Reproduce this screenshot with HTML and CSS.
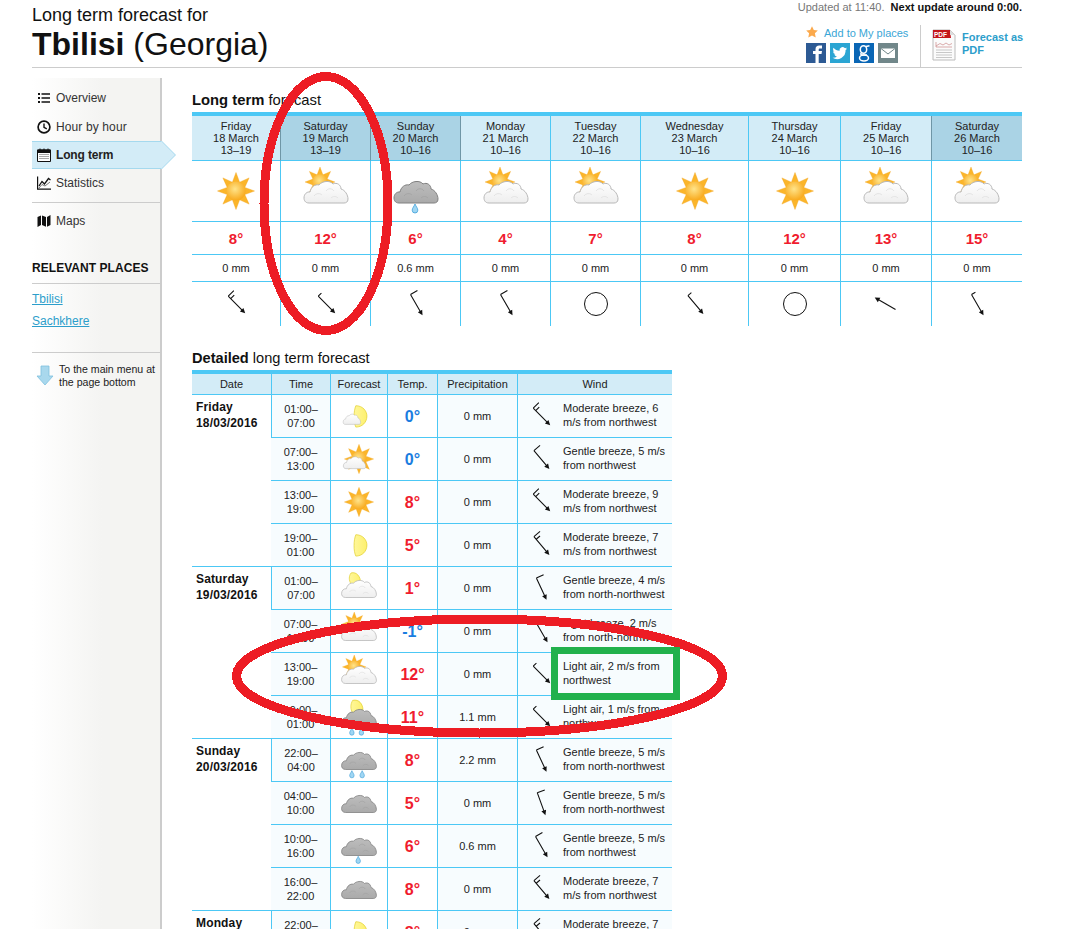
FILE: index.html
```html
<!DOCTYPE html>
<html lang="en">
<head>
<meta charset="utf-8">
<title>Long term forecast for Tbilisi (Georgia)</title>
<link rel="stylesheet" href="styles.css">
</head>
<body>
<svg class="defs" width="0" height="0" aria-hidden="true">
  <defs>
    <radialGradient id="g-core" cx="45%" cy="40%" r="60%"><stop offset="0" stop-color="#ffe48a"/><stop offset="1" stop-color="#f8a91c"/></radialGradient>
    <linearGradient id="g-white" x1="0" y1="0" x2="0" y2="1"><stop offset="0" stop-color="#ffffff"/><stop offset="1" stop-color="#eeeeee"/></linearGradient>
    <linearGradient id="g-gray" x1="0" y1="0" x2="0" y2="1"><stop offset="0" stop-color="#bdbdbd"/><stop offset="1" stop-color="#aaaaaa"/></linearGradient>
    <linearGradient id="g-moon" x1="0" y1="0" x2="1" y2="0"><stop offset="0" stop-color="#fff79a"/><stop offset="1" stop-color="#fdf06e"/></linearGradient>
    <g id="sunshape">
      <polygon fill="#fbb52a" stroke="#f3a51c" stroke-width=".4" points="42.5,24 32.8,27.6 37.1,37.1 27.6,32.8 24,42.5 20.4,32.8 10.9,37.1 15.2,27.6 5.5,24 15.2,20.4 10.9,10.9 20.4,15.2 24,5.5 27.6,15.2 37.1,10.9 32.8,20.4"/>
      <circle cx="24" cy="24" r="9.6" fill="url(#g-core)"/>
    </g>
    <path id="cloudshape" d="M7 36C3 36 2 33 2 31C2 27 5 24.500 8 25C9 20 13 17 17 18C20 14 28 13 31 17C35 15 39 18 39 22C43 23 46 28 46 32C46 35 44 36 42 36Z"/>
    <path id="dropshape" d="M0 0C1 2.500 2.800 4.200 2.800 6.200A2.800 2.800 0 0 1 -2.800 6.200C-2.800 4.200 -1 2.500 0 0Z" fill="#9fd6f3" stroke="#3f9fd8" stroke-width=".8"/>
    <path id="moonshape" d="M20 11C29 11 34 18 34 24C34 32 28 38 20 38C17 32 17 18 20 11Z" fill="url(#g-moon)" stroke="#e2cf2c" stroke-width=".9"/>
  </defs>
  <symbol id="i-sun" viewBox="0 0 48 48"><use href="#sunshape"/></symbol>
  <symbol id="i-partly" viewBox="0 0 48 48">
    <use href="#sunshape" transform="translate(-1.440 -4.440) scale(.81)"/>
    <use href="#cloudshape" fill="url(#g-white)" stroke="#b8b8b8"/>
    <path d="M12 29c2-3 6-3 8-1M24 24c2-3 6-3 8 0M29 31c2-2 5-2 7 0" fill="none" stroke="#dedede" stroke-width=".8"/>
  </symbol>
  <symbol id="i-sunsmallcloud" viewBox="0 0 48 48">
    <use href="#sunshape"/>
    <use href="#cloudshape" fill="url(#g-white)" stroke="#b2b2b2" transform="translate(3 11) scale(.64 .7)"/>
  </symbol>
  <symbol id="i-mooncloudsmall" viewBox="0 0 48 48">
    <use href="#moonshape"/>
    <use href="#cloudshape" fill="url(#g-white)" stroke="#b2b2b2" transform="translate(3 13) scale(.5 .6)"/>
  </symbol>
  <symbol id="i-moon" viewBox="0 0 48 48"><use href="#moonshape"/></symbol>
  <symbol id="i-moonbehind" viewBox="0 0 48 48">
    <path d="M14 5C21 3 26 10 26 17L14 19C11 14 11 9 14 5Z" fill="url(#g-moon)" stroke="#e2cf2c" stroke-width=".9"/>
    <use href="#cloudshape" fill="url(#g-white)" stroke="#b8b8b8"/>
    <path d="M12 29c2-3 6-3 8-1M24 24c2-3 6-3 8 0M29 31c2-2 5-2 7 0" fill="none" stroke="#dedede" stroke-width=".8"/>
  </symbol>
  <symbol id="i-moonrain" viewBox="0 0 48 48">
    <path d="M16 3C24 1 29 8 29 15L16 19C13 14 13 8 16 3Z" fill="url(#g-moon)" stroke="#e2cf2c" stroke-width=".9"/>
    <use href="#cloudshape" fill="url(#g-gray)" stroke="#808080"/>
    <use href="#dropshape" transform="translate(15 38)"/>
    <use href="#dropshape" transform="translate(27 38)"/>
  </symbol>
  <symbol id="i-cloud" viewBox="0 0 48 48">
    <use href="#cloudshape" fill="url(#g-gray)" stroke="#808080"/>
    <path d="M12 29c2-3 6-3 8-1M24 24c2-3 6-3 8 0M29 31c2-2 5-2 7 0" fill="none" stroke="#a2a2a2" stroke-width=".8"/>
  </symbol>
  <symbol id="i-rain1" viewBox="0 0 48 48">
    <use href="#cloudshape" fill="url(#g-gray)" stroke="#808080"/>
    <path d="M12 29c2-3 6-3 8-1M24 24c2-3 6-3 8 0M29 31c2-2 5-2 7 0" fill="none" stroke="#a2a2a2" stroke-width=".8"/>
    <use href="#dropshape" transform="translate(23 37)"/>
  </symbol>
  <symbol id="i-rain2" viewBox="0 0 48 48">
    <use href="#cloudshape" fill="url(#g-gray)" stroke="#808080"/>
    <path d="M12 29c2-3 6-3 8-1M24 24c2-3 6-3 8 0M29 31c2-2 5-2 7 0" fill="none" stroke="#a2a2a2" stroke-width=".8"/>
    <use href="#dropshape" transform="translate(15 37.500)"/>
    <use href="#dropshape" transform="translate(28 37.500)"/>
  </symbol>
  <symbol id="w-mod" viewBox="0 0 32 32">
    <path d="M16 5V26M16 5H24M16 8.500H21" fill="none" stroke="#111" stroke-width="1.100"/>
    <path d="M16 29L13.500 24H18.500Z" fill="#111"/>
  </symbol>
  <symbol id="w-gen" viewBox="0 0 32 32">
    <path d="M16 5V26M16 5H24" fill="none" stroke="#111" stroke-width="1.100"/>
    <path d="M16 29L13.500 24H18.500Z" fill="#111"/>
  </symbol>
  <symbol id="w-lig" viewBox="0 0 32 32">
    <path d="M16 5V26M16 5H20.500" fill="none" stroke="#111" stroke-width="1.100"/>
    <path d="M16 29L13.500 24H18.500Z" fill="#111"/>
  </symbol>
  <symbol id="w-none" viewBox="0 0 32 32">
    <path d="M16 5V26" fill="none" stroke="#111" stroke-width="1.100"/>
    <path d="M16 29L13.500 24H18.500Z" fill="#111"/>
  </symbol>
</svg>

<div class="page">
  <header class="top">
    <div class="title">
      <div class="title-sub">Long term forecast for</div>
      <h1 class="title-main"><strong>Tbilisi</strong> (Georgia)</h1>
    </div>
    <div class="top-right">
      <div class="updated">Updated at 11:40.&nbsp; <strong>Next update around 0:00.</strong></div>
      <div class="tools">
        <div class="share">
          <div class="add">
            <svg class="star" viewBox="0 0 12 12"><path d="M6 .3L7.800 4 11.800 4.500 8.900 7.300 9.700 11.500 6 9.400 2.300 11.500 3.100 7.300 .2 4.500 4.200 4Z" fill="#fba94c"/></svg>
            <a class="add-link">Add to My places</a>
          </div>
          <div class="social">
            <span class="soc soc-f"><svg viewBox="0 0 20 20"><path d="M9.500 20V11H7V8H9.500V6.200C9.500 3.800 11 2.500 13.200 2.500H16V5.500H14C13 5.500 12.700 6 12.700 6.800V8H16L15.500 11H12.700V20Z" fill="#fff"/></svg></span>
            <span class="soc soc-t"><svg viewBox="0 0 20 20"><path d="M17 5.500c-.6.300-1.100.4-1.700.5.600-.4 1.100-.9 1.300-1.600-.6.300-1.200.6-1.900.7A3 3 0 0 0 9.600 7.800C7.200 7.700 5 6.500 3.500 4.700c-.8 1.400-.4 3.100.9 4-.5 0-.9-.1-1.300-.4 0 1.500 1 2.700 2.400 3-.4.100-.9.100-1.300 0 .4 1.200 1.500 2 2.800 2.100A6 6 0 0 1 2.500 14.700 8.500 8.500 0 0 0 15.600 7.100c.6-.4 1-.9 1.400-1.600Z" fill="#fff"/></svg></span>
            <span class="soc soc-g"><svg viewBox="0 0 20 20"><g fill="none" stroke="#fff" stroke-width="1.500"><ellipse cx="9.500" cy="6.500" rx="3.200" ry="3.800"/><ellipse cx="10" cy="15" rx="4.500" ry="3"/><path d="M7.500 10C6 11 7 12 9 12C11 12 13 12 13 12M12 3.500L15.500 2.800"/></g></svg></span>
            <span class="soc soc-m"><svg viewBox="0 0 20 20"><path d="M3 5.500H17V15H3Z" fill="#fff"/><path d="M3 5.500L10 11 17 5.500" fill="none" stroke="#71878a" stroke-width="1"/></svg></span>
          </div>
        </div>
        <a class="pdf">
          <svg class="pdf-icon" viewBox="0 0 24 33">
            <path d="M1 1H18L23 6V31H1Z" fill="#fbfbfb" stroke="#bbbbbb"/>
            <path d="M1 1H18L19 9H1Z" fill="#c4161c"/>
            <path d="M18 1L23 6H18Z" fill="#dddddd"/>
            <path d="M4 13V18H20M4 17L8 14.500 11 16 14 14 17 16 20 14.500" fill="none" stroke="#c88" stroke-width=".7"/>
            <path d="M4 21H20M4 23.500H20M4 26H20M4 28.500H20" stroke="#bbbbbb" stroke-width=".8"/>
            <text x="2" y="7.500" class="pdf-label">PDF</text>
          </svg>
          <span class="pdf-text">Forecast as<br>PDF</span>
        </a>
      </div>
    </div>
  </header>

  <div class="main">
    <nav class="side">
      <ul class="menu">
        <li class="menu-item">
          <svg class="nav-ico" viewBox="0 0 14 14"><path d="M1 2h2v2H1zM1 6h2v2H1zM1 10h2v2H1zM4.500 2.300H13V3.700H4.500zM4.500 6.300H13V7.700H4.500zM4.500 10.300H13V11.700H4.500z" fill="#111"/></svg>
          Overview
        </li>
        <li class="menu-item menu-gap">
          <svg class="nav-ico" viewBox="0 0 14 14"><circle cx="7" cy="7" r="5.900" fill="none" stroke="#111" stroke-width="1.700"/><path d="M7 3.500V7.300L9.800 8.800" fill="none" stroke="#111" stroke-width="1.400"/></svg>
          Hour by hour
        </li>
        <li class="menu-item menu-active">
          <svg class="nav-ico" viewBox="0 0 14 14"><path d="M.5 2H13.500V13.500H.5Z" fill="#fff" stroke="#111"/><path d="M.5 2H13.500V4.500H.5ZM3 .5V2.500M7 .5V2.500M11 .5V2.500" fill="#111" stroke="#111"/><path d="M2.500 6.500H11.500M2.500 8.500H11.500M2.500 10.500H11.500" stroke="#555" stroke-width="1" stroke-dasharray="1 1"/></svg>
          Long term
        </li>
        <li class="menu-item">
          <svg class="nav-ico" viewBox="0 0 14 14"><path d="M.6 .5V13.200H14" fill="none" stroke="#111" stroke-width="1.200"/><path d="M2 10L5 5.500 7.500 8 11.500 2.500 13.500 4" fill="none" stroke="#111" stroke-width="1.300"/><path d="M2 12L5 8.500 8 10 13 6" fill="none" stroke="#555" stroke-width=".8"/></svg>
          Statistics
        </li>
        <li class="menu-item menu-sep">
          <svg class="nav-ico" viewBox="0 0 14 14"><path d="M.5 3L4 1.500V11L.5 13ZM5 1.500L9 3V12.800L5 11ZM10 3L13.500 1V11L10 12.800Z" fill="#111"/></svg>
          Maps
        </li>
      </ul>
      <h2 class="places-title">RELEVANT PLACES</h2>
      <ul class="places">
        <li><a class="place">Tbilisi</a></li>
        <li><a class="place">Sachkhere</a></li>
      </ul>
      <div class="to-menu">
        <svg class="down" viewBox="0 0 18 22"><path d="M5 1H13V11H17L9 20 1 11H5Z" fill="#a9d8ed" stroke="#7fc0de" stroke-width=".8"/></svg>
        <span>To the main menu at the page bottom</span>
      </div>
    </nav>

    <main class="content">
      <h2 class="section-title"><strong>Long term</strong> forecast</h2>
      <table class="long">
        <colgroup><col class="c88"><col class="c90"><col class="c90"><col class="c90"><col class="c90"><col class="c108"><col class="c92"><col class="c91"><col class="c91"></colgroup>
        <tr class="l-head">
          <th>Friday<br>18 March<br>13–19</th>
          <th class="wk">Saturday<br>19 March<br>13–19</th>
          <th class="wk">Sunday<br>20 March<br>10–16</th>
          <th>Monday<br>21 March<br>10–16</th>
          <th>Tuesday<br>22 March<br>10–16</th>
          <th>Wednesday<br>23 March<br>10–16</th>
          <th>Thursday<br>24 March<br>10–16</th>
          <th>Friday<br>25 March<br>10–16</th>
          <th class="wk">Saturday<br>26 March<br>10–16</th>
        </tr>
        <tr class="l-icon">
          <td><svg class="wx-l"><use href="#i-sun"/></svg></td>
          <td><svg class="wx-l"><use href="#i-partly"/></svg></td>
          <td><svg class="wx-l"><use href="#i-rain1"/></svg></td>
          <td><svg class="wx-l"><use href="#i-partly"/></svg></td>
          <td><svg class="wx-l"><use href="#i-partly"/></svg></td>
          <td><svg class="wx-l"><use href="#i-sun"/></svg></td>
          <td><svg class="wx-l"><use href="#i-sun"/></svg></td>
          <td><svg class="wx-l"><use href="#i-partly"/></svg></td>
          <td><svg class="wx-l"><use href="#i-partly"/></svg></td>
        </tr>
        <tr class="l-temp">
          <td>8°</td><td>12°</td><td>6°</td><td>4°</td><td>7°</td><td>8°</td><td>12°</td><td>13°</td><td>15°</td>
        </tr>
        <tr class="l-prec">
          <td>0 mm</td><td>0 mm</td><td>0.6 mm</td><td>0 mm</td><td>0 mm</td><td>0 mm</td><td>0 mm</td><td>0 mm</td><td>0 mm</td>
        </tr>
        <tr class="l-wind">
          <td><svg class="arrow r-45"><use href="#w-mod"/></svg></td>
          <td><svg class="arrow r-45"><use href="#w-lig"/></svg></td>
          <td><svg class="arrow r-30"><use href="#w-gen"/></svg></td>
          <td><svg class="arrow r-30"><use href="#w-gen"/></svg></td>
          <td><span class="calm"></span></td>
          <td><svg class="arrow r-40"><use href="#w-lig"/></svg></td>
          <td><span class="calm"></span></td>
          <td><svg class="arrow r120"><use href="#w-none"/></svg></td>
          <td><svg class="arrow r-30"><use href="#w-lig"/></svg></td>
        </tr>
      </table>

      <h2 class="section-title detail-title"><strong>Detailed</strong> long term forecast</h2>
      <table class="detail">
        <colgroup><col class="d79"><col class="d59"><col class="d57"><col class="d50"><col class="d80"><col class="d155"></colgroup>
        <tr class="d-head"><th>Date</th><th>Time</th><th>Forecast</th><th>Temp.</th><th>Precipitation</th><th>Wind</th></tr>

        <tr>
          <td rowspan="4" class="date">Friday<br>18/03/2016</td>
          <td class="time">01:00–<br>07:00</td>
          <td class="fc"><svg class="wx-s"><use href="#i-mooncloudsmall"/></svg></td>
          <td class="temp cold">0°</td><td class="prec">0 mm</td>
          <td><div class="wind"><svg class="arrow r-45"><use href="#w-mod"/></svg><span>Moderate breeze, 6 m/s from northwest</span></div></td>
        </tr>
        <tr>
          <td class="time">07:00–<br>13:00</td>
          <td class="fc"><svg class="wx-s"><use href="#i-sunsmallcloud"/></svg></td>
          <td class="temp cold">0°</td><td class="prec">0 mm</td>
          <td><div class="wind"><svg class="arrow r-40"><use href="#w-gen"/></svg><span>Gentle breeze, 5 m/s from northwest</span></div></td>
        </tr>
        <tr>
          <td class="time">13:00–<br>19:00</td>
          <td class="fc"><svg class="wx-s"><use href="#i-sun"/></svg></td>
          <td class="temp">8°</td><td class="prec">0 mm</td>
          <td><div class="wind"><svg class="arrow r-45"><use href="#w-mod"/></svg><span>Moderate breeze, 9 m/s from northwest</span></div></td>
        </tr>
        <tr class="grp-end">
          <td class="time">19:00–<br>01:00</td>
          <td class="fc"><svg class="wx-s"><use href="#i-moon"/></svg></td>
          <td class="temp">5°</td><td class="prec">0 mm</td>
          <td><div class="wind"><svg class="arrow r-40"><use href="#w-mod"/></svg><span>Moderate breeze, 7 m/s from northwest</span></div></td>
        </tr>

        <tr>
          <td rowspan="4" class="date">Saturday<br>19/03/2016</td>
          <td class="time">01:00–<br>07:00</td>
          <td class="fc"><svg class="wx-s"><use href="#i-moonbehind"/></svg></td>
          <td class="temp">1°</td><td class="prec">0 mm</td>
          <td><div class="wind"><svg class="arrow r-25"><use href="#w-gen"/></svg><span>Gentle breeze, 4 m/s from north-northwest</span></div></td>
        </tr>
        <tr>
          <td class="time">07:00–<br>13:00</td>
          <td class="fc"><svg class="wx-s"><use href="#i-partly"/></svg></td>
          <td class="temp cold">-1°</td><td class="prec">0 mm</td>
          <td><div class="wind"><svg class="arrow r-30"><use href="#w-lig"/></svg><span>Light breeze, 2 m/s from north-northwest</span></div></td>
        </tr>
        <tr>
          <td class="time">13:00–<br>19:00</td>
          <td class="fc"><svg class="wx-s"><use href="#i-partly"/></svg></td>
          <td class="temp">12°</td><td class="prec">0 mm</td>
          <td><div class="wind"><svg class="arrow r-45"><use href="#w-lig"/></svg><span>Light air, 2 m/s from northwest</span></div></td>
        </tr>
        <tr class="grp-end">
          <td class="time">19:00–<br>01:00</td>
          <td class="fc"><svg class="wx-s"><use href="#i-moonrain"/></svg></td>
          <td class="temp">11°</td><td class="prec">1.1 mm</td>
          <td><div class="wind"><svg class="arrow r-45"><use href="#w-lig"/></svg><span>Light air, 1 m/s from northwest</span></div></td>
        </tr>

        <tr>
          <td rowspan="4" class="date">Sunday<br>20/03/2016</td>
          <td class="time">22:00–<br>04:00</td>
          <td class="fc"><svg class="wx-s"><use href="#i-rain2"/></svg></td>
          <td class="temp">8°</td><td class="prec">2.2 mm</td>
          <td><div class="wind"><svg class="arrow r-25"><use href="#w-gen"/></svg><span>Gentle breeze, 5 m/s from north-northwest</span></div></td>
        </tr>
        <tr>
          <td class="time">04:00–<br>10:00</td>
          <td class="fc"><svg class="wx-s"><use href="#i-cloud"/></svg></td>
          <td class="temp">5°</td><td class="prec">0 mm</td>
          <td><div class="wind"><svg class="arrow r-20"><use href="#w-gen"/></svg><span>Gentle breeze, 5 m/s from north-northwest</span></div></td>
        </tr>
        <tr>
          <td class="time">10:00–<br>16:00</td>
          <td class="fc"><svg class="wx-s"><use href="#i-rain1"/></svg></td>
          <td class="temp">6°</td><td class="prec">0.6 mm</td>
          <td><div class="wind"><svg class="arrow r-30"><use href="#w-gen"/></svg><span>Gentle breeze, 5 m/s from northwest</span></div></td>
        </tr>
        <tr class="grp-end">
          <td class="time">16:00–<br>22:00</td>
          <td class="fc"><svg class="wx-s"><use href="#i-cloud"/></svg></td>
          <td class="temp">8°</td><td class="prec">0 mm</td>
          <td><div class="wind"><svg class="arrow r-40"><use href="#w-mod"/></svg><span>Moderate breeze, 7 m/s from northwest</span></div></td>
        </tr>

        <tr>
          <td rowspan="4" class="date">Monday<br>21/03/2016</td>
          <td class="time">22:00–<br>04:00</td>
          <td class="fc"><svg class="wx-s"><use href="#i-moon"/></svg></td>
          <td class="temp">8°</td><td class="prec">0 mm</td>
          <td><div class="wind"><svg class="arrow r-40"><use href="#w-mod"/></svg><span>Moderate breeze, 7 m/s from northwest</span></div></td>
        </tr>
      </table>
    </main>
  </div>
</div>

<svg class="marks" viewBox="0 0 1065 929" aria-hidden="true">
  <ellipse class="mark-red" cx="326" cy="203.500" rx="62" ry="127"/>
  <ellipse class="mark-red" cx="479.500" cy="676" rx="243" ry="57"/>
  <rect class="mark-green" x="554.500" y="650.500" width="122" height="46"/>
</svg>
</body>
</html>
```
FILE: styles.css
```css
* { box-sizing: border-box; }
html, body { margin: 0; padding: 0; }
body {
  position: relative;
  width: 1065px;
  height: 929px;
  overflow: hidden;
  background: #fff;
  color: #222;
  font-family: "Liberation Sans", Arial, sans-serif;
  font-size: 11px;
}
.defs { position: absolute; }
.marks { position: absolute; left: 0; top: 0; width: 1065px; height: 929px; pointer-events: none; }
.mark-red { fill: none; stroke: #ed1c24; stroke-width: 9; shape-rendering: crispEdges; }
.mark-green { fill: none; stroke: #22b14c; stroke-width: 7; shape-rendering: crispEdges; }

.page { width: 990px; margin-left: 32px; }

/* header */
.top {
  display: flex;
  justify-content: space-between;
  height: 68px;
  border-bottom: 1px solid #cccccc;
}
.title-sub { font-size: 18px; line-height: 20px; padding-top: 5px; color: #111; }
.title-main { margin: 0; font-size: 32px; line-height: 38px; font-weight: normal; color: #111; }
.top-right { display: flex; flex-direction: column; align-items: flex-end; }
.updated { font-size: 11px; line-height: 14px; color: #777; }
.updated strong { color: #111; }
.tools { display: flex; margin-top: 10px; height: 43px; }
.share { width: 114px; }
.add { display: flex; align-items: center; height: 18px; }
.star { width: 12px; height: 12px; margin-right: 6px; margin-top: -2px; }
.add-link { color: #3aa6d6; font-size: 11px; }
.social { display: flex; gap: 4px; margin-top: 1px; }
.soc { display: block; width: 20px; height: 20px; }
.soc svg { width: 20px; height: 20px; display: block; }
.soc-f { background: #2d5a94; }
.soc-t { background: #2ba5d3; }
.soc-g { background: #0a66b5; }
.soc-m { background: #71878a; }
.pdf {
  display: flex;
  width: 102px;
  margin-top: 1px;
  border-left: 1px solid #cccccc;
  padding-left: 11px;
}
.pdf-icon { width: 24px; height: 33px; margin-top: 4px; flex: none; }
.pdf-label { font: bold 6.500px "Liberation Sans", sans-serif; fill: #fff; }
.pdf-text {
  margin: 6px 0 0 6px;
  color: #2c9ecb;
  font-weight: bold;
  font-size: 11px;
  line-height: 13px;
  white-space: nowrap;
}

/* layout */
.main { display: flex; margin-top: 10px; }

/* sidebar */
.side {
  width: 130px;
  height: 851px;
  flex: none;
  border-right: 2px solid #cccccc;
  background: linear-gradient(to right, #ffffff 0, #f4f4f2 55%, #f4f4f2 100%);
  font-size: 12px;
  color: #333;
}
.menu, .places { list-style: none; margin: 0; padding: 0; }
.menu { padding-top: 6px; }
.menu-item {
  display: flex;
  align-items: center;
  height: 28px;
  padding-left: 5px;
  position: relative;
}
.menu-gap { margin-top: 1px; letter-spacing: .12px; }
.nav-ico { width: 14px; height: 14px; margin-right: 5px; flex: none; }
.menu-active {
  background: #d3ecf7;
  border-top: 1px solid #a5d9ee;
  border-bottom: 1px solid #a5d9ee;
  margin-right: -2px;
  font-weight: bold;
  letter-spacing: -.15px;
  color: #222;
}
.menu-active::before, .menu-active::after {
  content: "";
  position: absolute;
  top: -1px;
  left: 130px;
  border-style: solid;
  border-width: 14px 0 14px 14px;
  border-color: transparent transparent transparent #a5d9ee;
}
.menu-active::after { left: 129px; border-left-color: #d3ecf7; }
.menu-sep {
  margin-top: 5px;
  padding-top: 2px;
  height: 34px;
  border-top: 1px solid #cccccc;
}
.places-title {
  margin: 23px 0 0;
  height: 25px;
  border-bottom: 1px solid #cccccc;
  font-size: 12px;
  line-height: 19px;
  letter-spacing: .05px;
  color: #111;
}
.places { padding-top: 5px; }
.places li { height: 22px; line-height: 20px; }
.place { color: #2c9ecb; text-decoration: underline; }
.to-menu {
  display: flex;
  margin-top: 19px;
  padding: 10px 0 0 4px;
  border-top: 1px solid #cccccc;
  font-size: 10.600px;
  line-height: 13px;
  color: #222;
}
.down { width: 18px; height: 22px; margin: 2px 5px 0 0; flex: none; }

/* content */
.content { margin-left: 30px; width: 830px; }
.section-title {
  margin: 0;
  font-size: 14.800px;
  font-weight: normal;
  line-height: 17px;
  color: #111;
  padding-top: 14px;
  height: 34px;
}
.detail-title { margin-top: 23px; padding-top: 0; height: 21px; line-height: 18px; font-size: 14.600px; }

table { border-collapse: separate; border-spacing: 0; table-layout: fixed; font-size: 11px; color: #222; }
.long { width: 830px; border-top: 4px solid #4cc8f5; }
.detail { width: 480px; border-top: 4px solid #4cc8f5; }
.c88 { width: 88px; } .c90 { width: 90px; } .c108 { width: 108px; } .c92 { width: 92px; } .c91 { width: 91px; }
.d79 { width: 79px; } .d59 { width: 59px; } .d57 { width: 57px; } .d50 { width: 50px; } .d80 { width: 80px; } .d155 { width: 155px; }

.long th, .long td, .detail th, .detail td {
  padding: 0;
  text-align: center;
  border-left: 1px solid #4cc8f5;
  border-bottom: 1px solid #4cc8f5;
  font-weight: normal;
}
.long tr > :first-child, .detail tr > :first-child { border-left: 0; }
.long .l-wind td { border-bottom: 0; height: 44px; }
.l-head th { height: 45px; background: #d3ecf7; line-height: 12px; vertical-align: middle; }
.l-head th.wk { background: #aad3e5; border-left-color: #6f96a6; }
.l-head th.wk + th:not(.wk) { border-left-color: #6f96a6; }
.l-icon td { height: 61px; vertical-align: top; padding-top: 6px; }
.l-temp td { height: 33px; font-size: 15px; font-weight: bold; color: #f01c2e; }
.l-prec td { height: 27px; }
.wx-l { width: 48px; height: 48px; display: block; margin: 0 auto; }
.wx-s { width: 38px; height: 38px; display: block; margin: 0 auto; }
.arrow { width: 32px; height: 32px; display: block; flex: none; }
.l-wind .arrow { margin: 0 auto; }
.calm {
  display: block;
  width: 24px;
  height: 24px;
  margin: 0 auto;
  border: 1px solid #111;
  border-radius: 50%;
}
.r-45 { transform: rotate(-45deg); }
.r-40 { transform: rotate(-40deg); }
.r-30 { transform: rotate(-30deg); }
.r-25 { transform: rotate(-25deg); }
.r-20 { transform: rotate(-20deg); }
.r120 { transform: rotate(120deg); }

.d-head th { height: 21px; background: #d3ecf7; }
.detail td { height: 43px; background: #f7fcfe; line-height: 14px; }
.detail td.date {
  background: #fff;
  text-align: left;
  vertical-align: top;
  padding: 4px 0 0 4px;
  font-size: 12px;
  line-height: 16px;
  font-weight: bold;
  letter-spacing: .15px;
  color: #111;
}
.detail td.fc, .detail td.temp { background: #fff; }
.detail td.temp { font-size: 16px; font-weight: bold; color: #f01c2e; padding-top: 2px; }
.detail td.temp.cold { color: #1a7de0; }
.wind { display: flex; align-items: center; text-align: left; padding-left: 7px; gap: 6px; }
.wind span { width: 112px; margin-top: -2px; }
```
